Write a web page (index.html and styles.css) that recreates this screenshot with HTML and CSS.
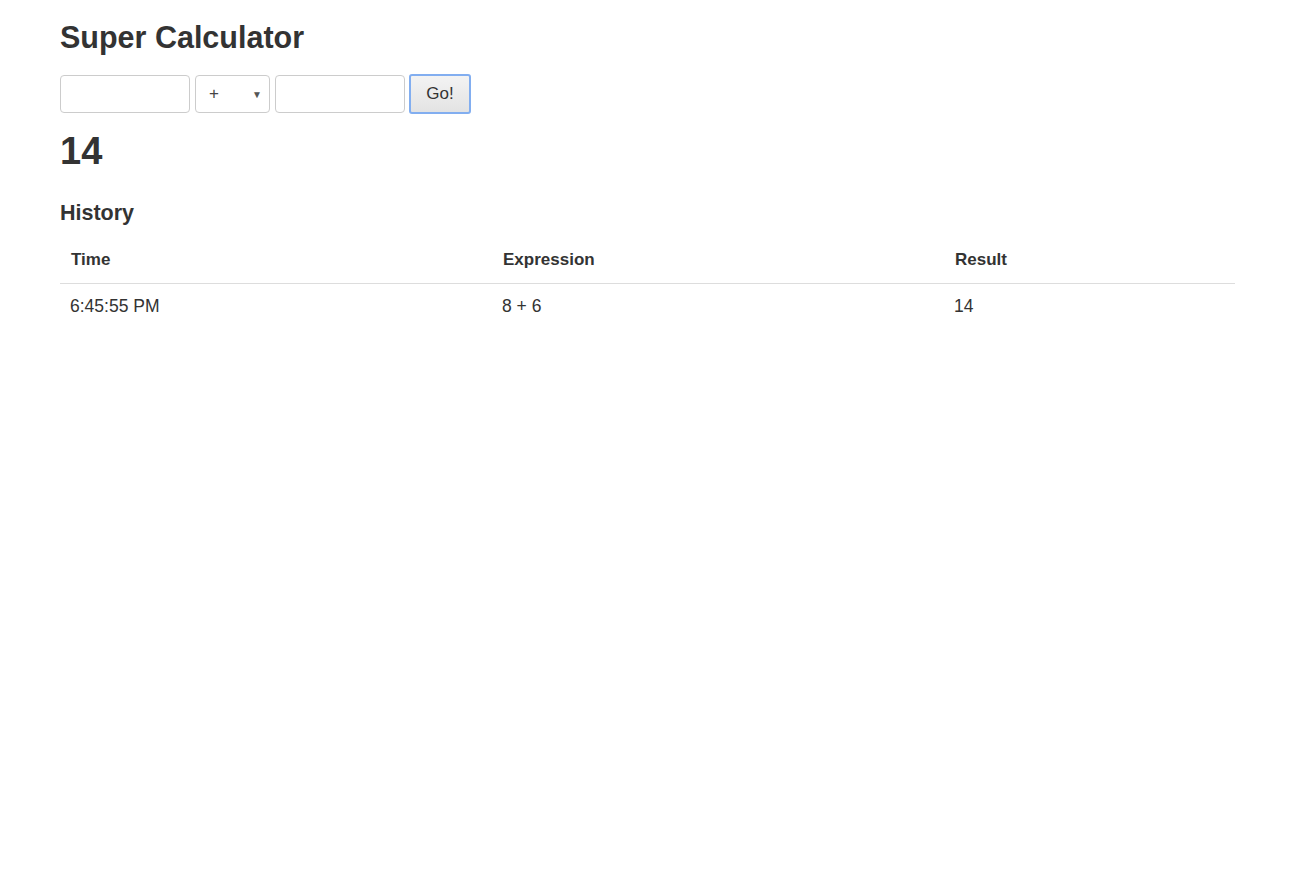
FILE: index.html
```html
<!DOCTYPE html>
<html>
<head>
<meta charset="utf-8">
<link rel="stylesheet" href="styles.css">
</head>
<body>
<div class="container">
  <h2 class="title">Super Calculator</h2>
  <form class="calc">
    <input class="field" type="text">
    <div class="select"><span class="op">+</span><span class="caret">▼</span></div>
    <input class="field" type="text">
    <button class="go" type="button">Go!</button>
  </form>
  <h1 class="result">14</h1>
  <h4 class="history-title">History</h4>
  <table class="history">
    <thead>
      <tr><th class="c1">Time</th><th class="c2">Expression</th><th class="c3">Result</th></tr>
    </thead>
    <tbody>
      <tr><td>6:45:55 PM</td><td>8 + 6</td><td>14</td></tr>
    </tbody>
  </table>
</div>
</body>
</html>
```
FILE: styles.css
```css
html, body {
  margin: 0;
  padding: 0;
  background: #fff;
}
body {
  font-family: "Liberation Sans", Arial, sans-serif;
  font-size: 17.5px;
  color: #333;
}
.container {
  padding: 0 60px;
}
.title {
  margin: 0;
  padding-top: 19px;
  font-size: 30.5px;
  line-height: 37px;
  font-weight: bold;
}
.calc {
  margin: 18px 0 0;
  display: flex;
  align-items: center;
  gap: 5px;
  height: 40px;
}
.field {
  box-sizing: border-box;
  width: 130px;
  height: 38px;
  border: 1px solid #ccc;
  border-radius: 4px;
  margin: 0;
  padding: 0 10px;
  font: inherit;
}
.select {
  box-sizing: border-box;
  width: 75px;
  height: 38px;
  border: 1px solid #ccc;
  border-radius: 4px;
  display: flex;
  align-items: center;
  justify-content: space-between;
  padding: 0 7px 0 13px;
  color: #444;
}
.op {
  font-size: 17px;
}
.caret {
  font-size: 10px;
  color: #555;
}
.go {
  box-sizing: border-box;
  width: 62px;
  height: 40px;
  margin-left: -1px;
  border: 2px solid #82aef0;
  border-radius: 3px;
  background: linear-gradient(#f3f3f3, #e3e3e3);
  font: inherit;
  font-size: 17px;
  color: #333;
  padding: 0;
}
.result {
  margin: 0;
  padding-top: 15px;
  font-size: 38px;
  line-height: 44px;
  font-weight: bold;
}
.history-title {
  margin: 0;
  padding-top: 28px;
  font-size: 21.5px;
  line-height: 25px;
  font-weight: bold;
}
.history {
  margin-top: 12px;
  width: 100%;
  border-collapse: collapse;
}
.history th, .history td {
  text-align: left;
  padding: 10px 10px;
  line-height: 25px;
}
.history th {
  font-weight: bold;
  font-size: 17px;
  border-bottom: 1px solid #ddd;
  padding-top: 9px;
  padding-bottom: 11px;
  padding-left: 11px;
}
.c1 { width: 411px; }
.c2 { width: 431px; }
```
